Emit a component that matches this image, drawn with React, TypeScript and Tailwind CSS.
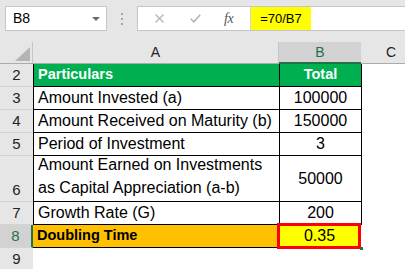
import { ReactNode } from 'react'

type Row = { n: string; a: ReactNode; b: string; tall?: boolean }

const rows: Row[] = [
  { n: '3', a: 'Amount Invested (a)', b: '100000' },
  { n: '4', a: 'Amount Received on Maturity (b)', b: '150000' },
  { n: '5', a: 'Period of Investment', b: '3' },
  {
    n: '6',
    a: (
      <>
        Amount Earned on Investments
        <br />
        as Capital Appreciation (a-b)
      </>
    ),
    b: '50000',
    tall: true,
  },
  { n: '7', a: 'Growth Rate (G)', b: '200' },
]

function RowHead({ n, tall, active }: { n: string; tall?: boolean; active?: boolean }) {
  return (
    <div
      className={`w-[33px] shrink-0 flex items-end justify-center pb-[2px] text-[15px] leading-[18px] border-b border-[#d4d4d4] ${
        tall ? 'h-[46px]' : 'h-[23px]'
      } ${active ? 'bg-[#d2d2d2] text-[#217346] border-r-2 border-r-[#217346]' : 'bg-[#e6e6e6] text-[#222]'}`}
    >
      {n}
    </div>
  )
}

function FormulaBar() {
  return (
    <div className="h-[42px] flex items-start pt-[6px] pl-[5px]">
      <div className="w-[102px] h-[25px] bg-white border border-[#c6c6c6] flex items-center justify-between pl-[7px] pr-[6px] text-[14px]">
        <span>B8</span>
        <svg width="8" height="4" viewBox="0 0 8 4">
          <path d="M0 0h8L4 4z" fill="#6b6b6b" />
        </svg>
      </div>
      <div className="w-[30px] h-[25px] flex flex-col items-center justify-center gap-[3px]">
        <span className="w-[2px] h-[2px] bg-[#a6a6a6]" />
        <span className="w-[2px] h-[2px] bg-[#a6a6a6]" />
        <span className="w-[2px] h-[2px] bg-[#a6a6a6]" />
      </div>
      <div className="flex-1 h-[25px] bg-white border border-[#c6c6c6] border-r-0 flex">
        <div className="w-[113px] flex items-center border-r border-[#d4d4d4]">
          <svg className="ml-[17px]" width="9" height="9" viewBox="0 0 9 9">
            <path d="M0.5 0.5l8 8M8.5 0.5l-8 8" stroke="#b4b4b4" strokeWidth="1.2" />
          </svg>
          <svg className="ml-[26px]" width="11" height="9" viewBox="0 0 11 9">
            <path d="M0.8 4.8l3 3L10.2 0.8" stroke="#b4b4b4" strokeWidth="1.6" fill="none" />
          </svg>
          <span className="ml-[23px] font-['Liberation_Serif',serif] italic text-[14px] text-[#555] tracking-[-0.5px]">
            fx
          </span>
        </div>
        <div className="bg-[#ffff00] h-full w-[60px] flex items-center justify-center text-[13px]">=70/B7</div>
      </div>
    </div>
  )
}

export default function App() {
  return (
    <div className="w-[405px] h-[269px] overflow-hidden bg-[#e6e6e6] text-black font-['Liberation_Sans',Arial,sans-serif]">
      <FormulaBar />

      {/* column headers */}
      <div className="h-[22px] flex border-b border-[#ababab] text-[14px] text-[#222]">
        <div className="w-[33px] shrink-0 relative border-r border-[#c6c6c6]">
          <svg className="absolute left-[15px] top-[5px]" width="15" height="14" viewBox="0 0 15 14">
            <path d="M0 14L15 0v14z" fill="#b4b4b4" />
          </svg>
        </div>
        <div className="w-[246px] shrink-0 flex items-center justify-center border-r border-[#c6c6c6]">A</div>
        <div className="w-[82px] shrink-0 flex items-center justify-center bg-[#d2d2d2] text-[#217346] border-b-2 border-[#217346] -mb-px">
          B
        </div>
        <div className="w-[60px] shrink-0 flex items-center justify-center">C</div>
      </div>

      <div className="bg-white">
        <div className="flex">
          <RowHead n="2" />
          <div className="w-[246px] h-[23px] shrink-0 bg-[#00b050] border-l border-b border-black flex items-end pl-[4px] pb-[3px] text-white font-bold text-[14.5px] leading-[17px]">
            Particulars
          </div>
          <div className="w-[83px] h-[23px] shrink-0 bg-[#00b050] border-x border-b border-black flex items-end justify-center pb-[3px] text-white font-bold text-[14.5px] leading-[17px]">
            Total
          </div>
        </div>

        {rows.map(r => (
          <div key={r.n} className="flex">
            <RowHead n={r.n} tall={r.tall} />
            <div
              className={`w-[246px] shrink-0 border-l border-b border-black flex items-end pl-[4px] pb-[2px] text-[16px] ${
                r.tall ? 'h-[46px] leading-[23px]' : 'h-[23px] leading-[19px]'
              }`}
            >
              <span>{r.a}</span>
            </div>
            <div
              className={`w-[83px] shrink-0 border-x border-b border-black flex justify-center text-[16px] ${
                r.tall ? 'h-[46px] items-center leading-[19px]' : 'h-[23px] items-end pb-[2px] leading-[19px]'
              }`}
            >
              {r.b}
            </div>
          </div>
        ))}

        <div className="flex">
          <RowHead n="8" active />
          <div className="w-[245px] h-[23px] shrink-0 bg-[#ffc000] border-b border-black flex items-end pl-[4px] pb-[3px] font-bold text-[14.5px] leading-[17px]">
            Doubling Time
          </div>
          <div className="w-[83px] h-[23px] shrink-0 relative bg-[#ffff00] border-x border-b border-black flex items-end justify-center pb-[2px] text-[16px] leading-[19px]">
            0.35
            <span className="absolute -left-[2px] -top-[2px] -right-px -bottom-[2px] border-[3px] border-[#ff0000]" />
            <span className="absolute -right-[3px] -bottom-[3px] w-[3px] h-[3px] bg-[#217346]" />
          </div>
        </div>

        <div className="flex">
          <RowHead n="9" />
        </div>
      </div>
    </div>
  )
}
